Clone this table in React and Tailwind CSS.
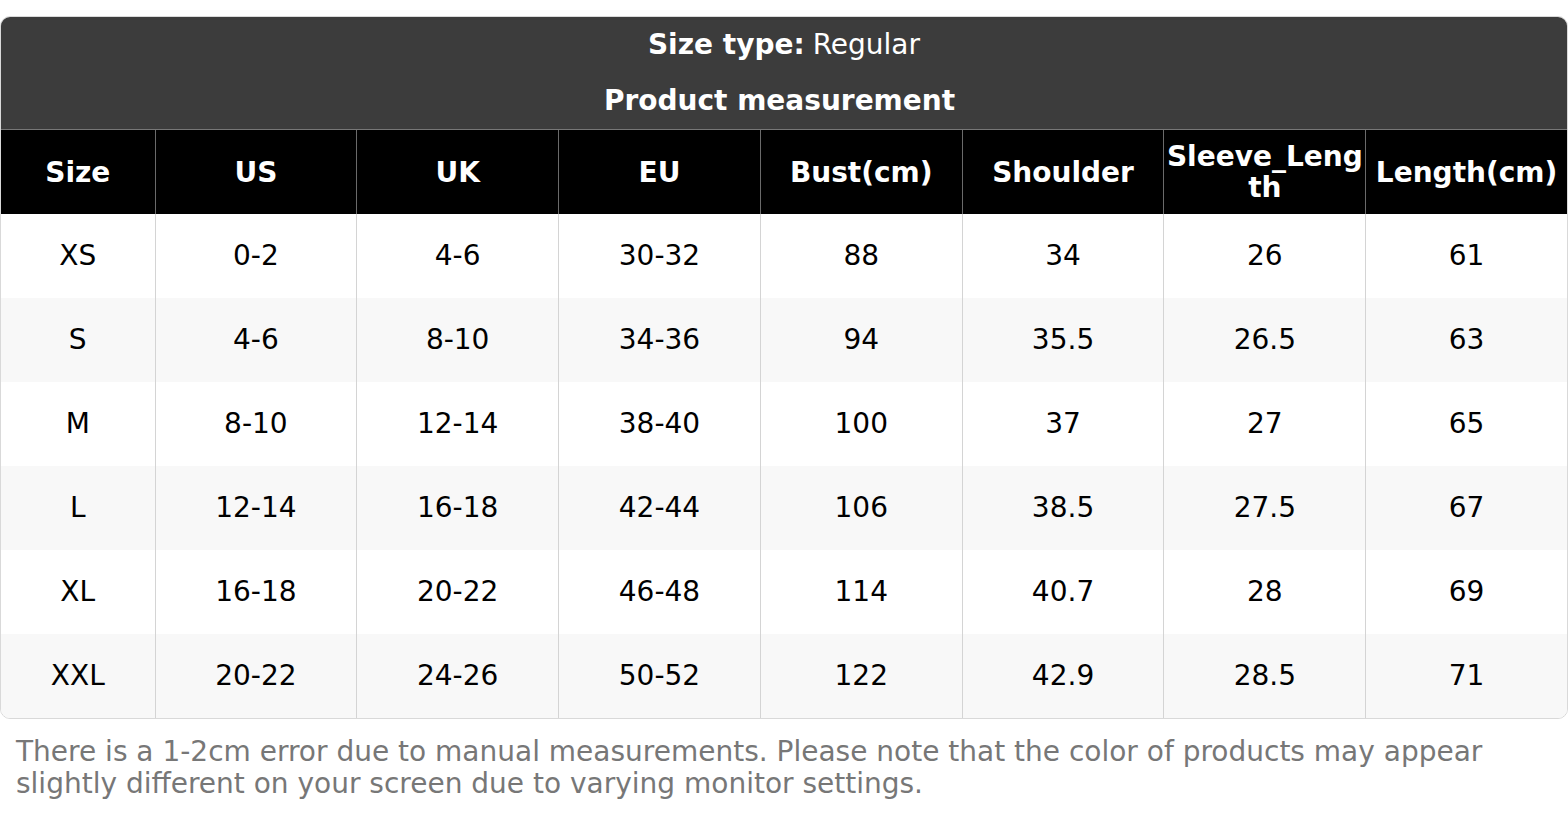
import React from "react";

const columns = ["Size", "US", "UK", "EU", "Bust(cm)", "Shoulder", "Sleeve_Length", "Length(cm)"];

const rows = [
  ["XS", "0-2", "4-6", "30-32", "88", "34", "26", "61"],
  ["S", "4-6", "8-10", "34-36", "94", "35.5", "26.5", "63"],
  ["M", "8-10", "12-14", "38-40", "100", "37", "27", "65"],
  ["L", "12-14", "16-18", "42-44", "106", "38.5", "27.5", "67"],
  ["XL", "16-18", "20-22", "46-48", "114", "40.7", "28", "69"],
  ["XXL", "20-22", "24-26", "50-52", "122", "42.9", "28.5", "71"],
];

export default function App() {
  return (
    <div className="w-[1568px] pt-4 font-['DejaVu_Sans',sans-serif]">
      <div className="rounded-[10px] border border-[#d9d9d9] overflow-hidden">
        {/* title block */}
        <div className="bg-[#3c3c3c] text-white text-center text-[28px]">
          <div className="h-14 flex items-center justify-center">
            <span className="font-bold">Size type:</span>
            <span className="ml-2">Regular</span>
          </div>
          <div className="h-14 flex items-center justify-center font-bold pr-[9px]">
            Product measurement
          </div>
        </div>

        {/* column heads */}
        <div className="grid grid-cols-[153.5px_repeat(7,1fr)] bg-black border-t border-[#777777]">
          {columns.map((c, i) => (
            <div
              key={c}
              className={`h-[84px] flex items-center justify-center text-center text-white font-bold text-[28px] leading-[31px] break-all px-0.5 ${
                i > 0 ? "border-l border-[#6a6a6a]" : ""
              }`}
            >
              {c}
            </div>
          ))}
        </div>

        {/* body */}
        {rows.map((r, ri) => (
          <div
            key={r[0]}
            className={`grid grid-cols-[153.5px_repeat(7,1fr)] ${ri % 2 ? "bg-[#f8f8f8]" : "bg-white"}`}
          >
            {r.map((v, i) => (
              <div
                key={i}
                className={`h-[84px] flex items-center justify-center text-[28px] text-black ${
                  i > 0 ? "border-l border-[#d4d4d4]" : ""
                }`}
              >
                {v}
              </div>
            ))}
          </div>
        ))}
      </div>

      <p className="mt-[17px] px-4 text-[28px] leading-8 text-[#777777]">
        There is a 1-2cm error due to manual measurements. Please note that the color of products may appear slightly different on your screen due to varying monitor settings.
      </p>
    </div>
  );
}
